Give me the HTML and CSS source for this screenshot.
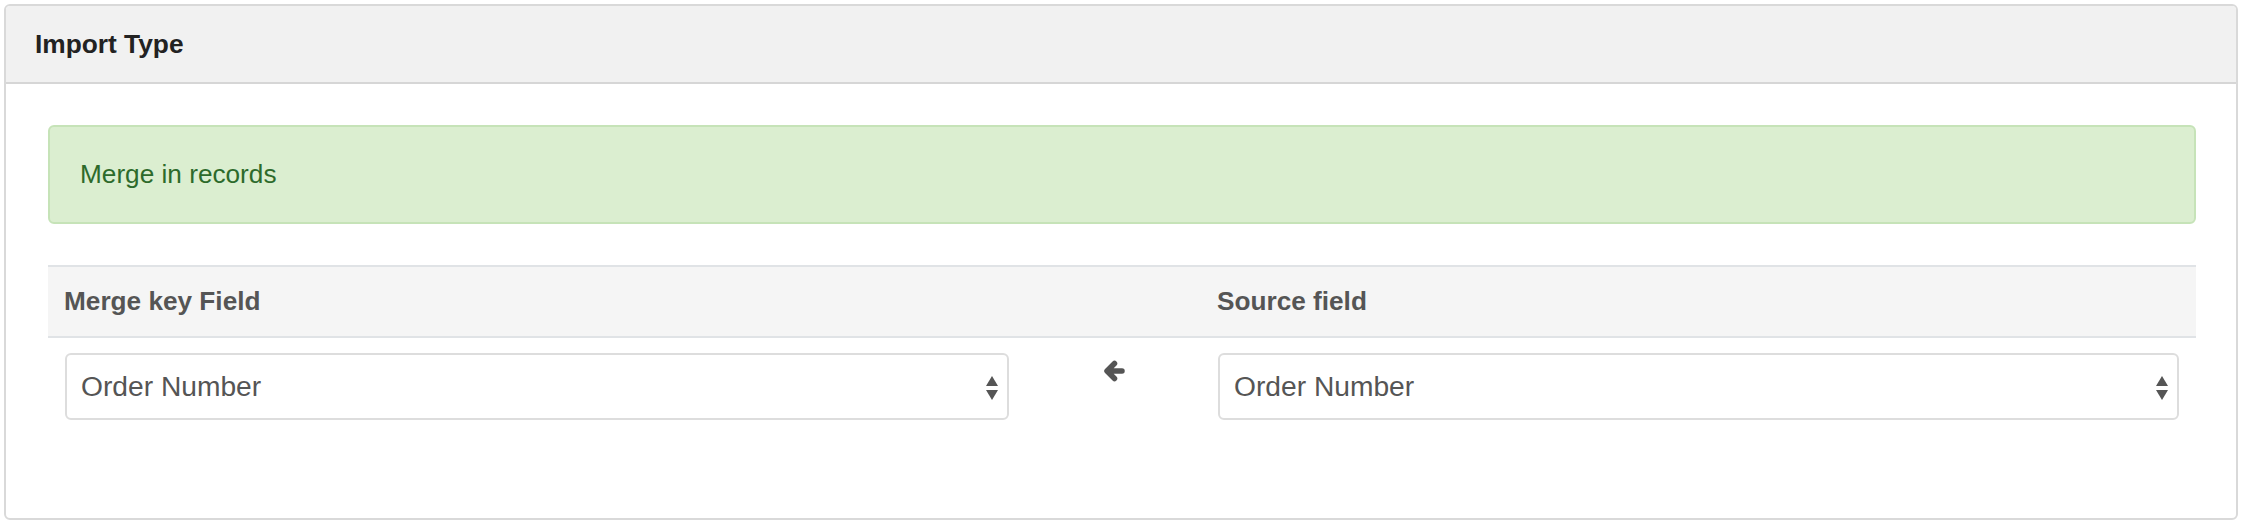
FILE: index.html
```html
<!DOCTYPE html>
<html>
<head>
<meta charset="utf-8">
<link rel="stylesheet" href="styles.css">
</head>
<body>
<div class="panel">
  <div class="panel-heading">Import Type</div>
  <div class="panel-body">
    <div class="alert">Merge in records</div>
    <div class="map">
      <div class="map-row map-head">
        <div class="cell">Merge key Field</div>
        <div class="cell"></div>
        <div class="cell">Source field</div>
      </div>
      <div class="map-row map-body">
        <div class="cell">
          <div class="select">
            <span>Order Number</span>
            <span class="carets"><i class="up"></i><i class="down"></i></span>
          </div>
        </div>
        <div class="cell arrow-cell">
          <svg class="arrow" viewBox="0 0 22 22" aria-hidden="true">
            <path d="M11.5 3.5 L4 11 L11.5 18.5 M4.5 11 H19" />
          </svg>
        </div>
        <div class="cell">
          <div class="select">
            <span>Order Number</span>
            <span class="carets"><i class="up"></i><i class="down"></i></span>
          </div>
        </div>
      </div>
    </div>
  </div>
</div>
</body>
</html>
```

FILE: styles.css
```css
html, body {
  margin: 0;
  padding: 0;
  background: #ffffff;
}

body {
  font-family: "Liberation Sans", Arial, Helvetica, sans-serif;
  color: #555555;
}

.panel {
  box-sizing: border-box;
  margin: 4px 0 0 4px;
  width: 2234px;
  height: 516px;
  border: 2px solid #d9d9d9;
  border-radius: 6px;
  overflow: hidden;
  background: #ffffff;
}

.panel-heading {
  box-sizing: border-box;
  height: 78px;
  padding-left: 29px;
  display: flex;
  align-items: center;
  background: #f1f1f1;
  border-bottom: 2px solid #d6d6d6;
  font-weight: bold;
  font-size: 26.3px;
  color: #222222;
}

.panel-body {
  padding: 41px 40px 0 42px;
}

.alert {
  box-sizing: border-box;
  height: 99px;
  display: flex;
  align-items: center;
  padding-left: 30px;
  background: #dbeed0;
  border: 2px solid #c6e3b8;
  border-radius: 6px;
  color: #2d6a2b;
  font-size: 26.2px;
}

.map {
  margin-top: 41px;
}

.map-row {
  display: grid;
  grid-template-columns: 978px 175px 1fr;
}

.map-head {
  box-sizing: border-box;
  height: 73px;
  background: #f5f5f5;
  border-top: 2px solid #e0e3e6;
  border-bottom: 2px solid #e0e3e6;
  align-items: center;
  font-weight: bold;
  font-size: 26.2px;
  color: #555555;
}

.map-head .cell {
  padding-left: 16px;
}

.map-body {
  padding-top: 15px;
}

.map-body .cell {
  padding: 0 17px;
}

.select {
  box-sizing: border-box;
  height: 67px;
  border: 2px solid #dddddd;
  border-radius: 6px;
  display: flex;
  align-items: center;
  justify-content: space-between;
  padding: 0 9px 0 14px;
  font-size: 28.2px;
  color: #555555;
  background: #ffffff;
}

.carets {
  display: flex;
  flex-direction: column;
  align-items: center;
  gap: 4px;
  margin-top: 2px;
}

.carets i {
  display: block;
  width: 0;
  height: 0;
  border-left: 6.5px solid transparent;
  border-right: 6.5px solid transparent;
}

.carets .up {
  border-bottom: 10px solid #555555;
}

.carets .down {
  border-top: 10px solid #555555;
}

.arrow-cell {
  display: flex;
  justify-content: center;
  align-items: flex-start;
}

.arrow {
  width: 22px;
  height: 22px;
  margin-top: 7px;
  fill: none;
  stroke: #555555;
  stroke-width: 5.5;
  stroke-linecap: round;
  stroke-linejoin: round;
}
```
